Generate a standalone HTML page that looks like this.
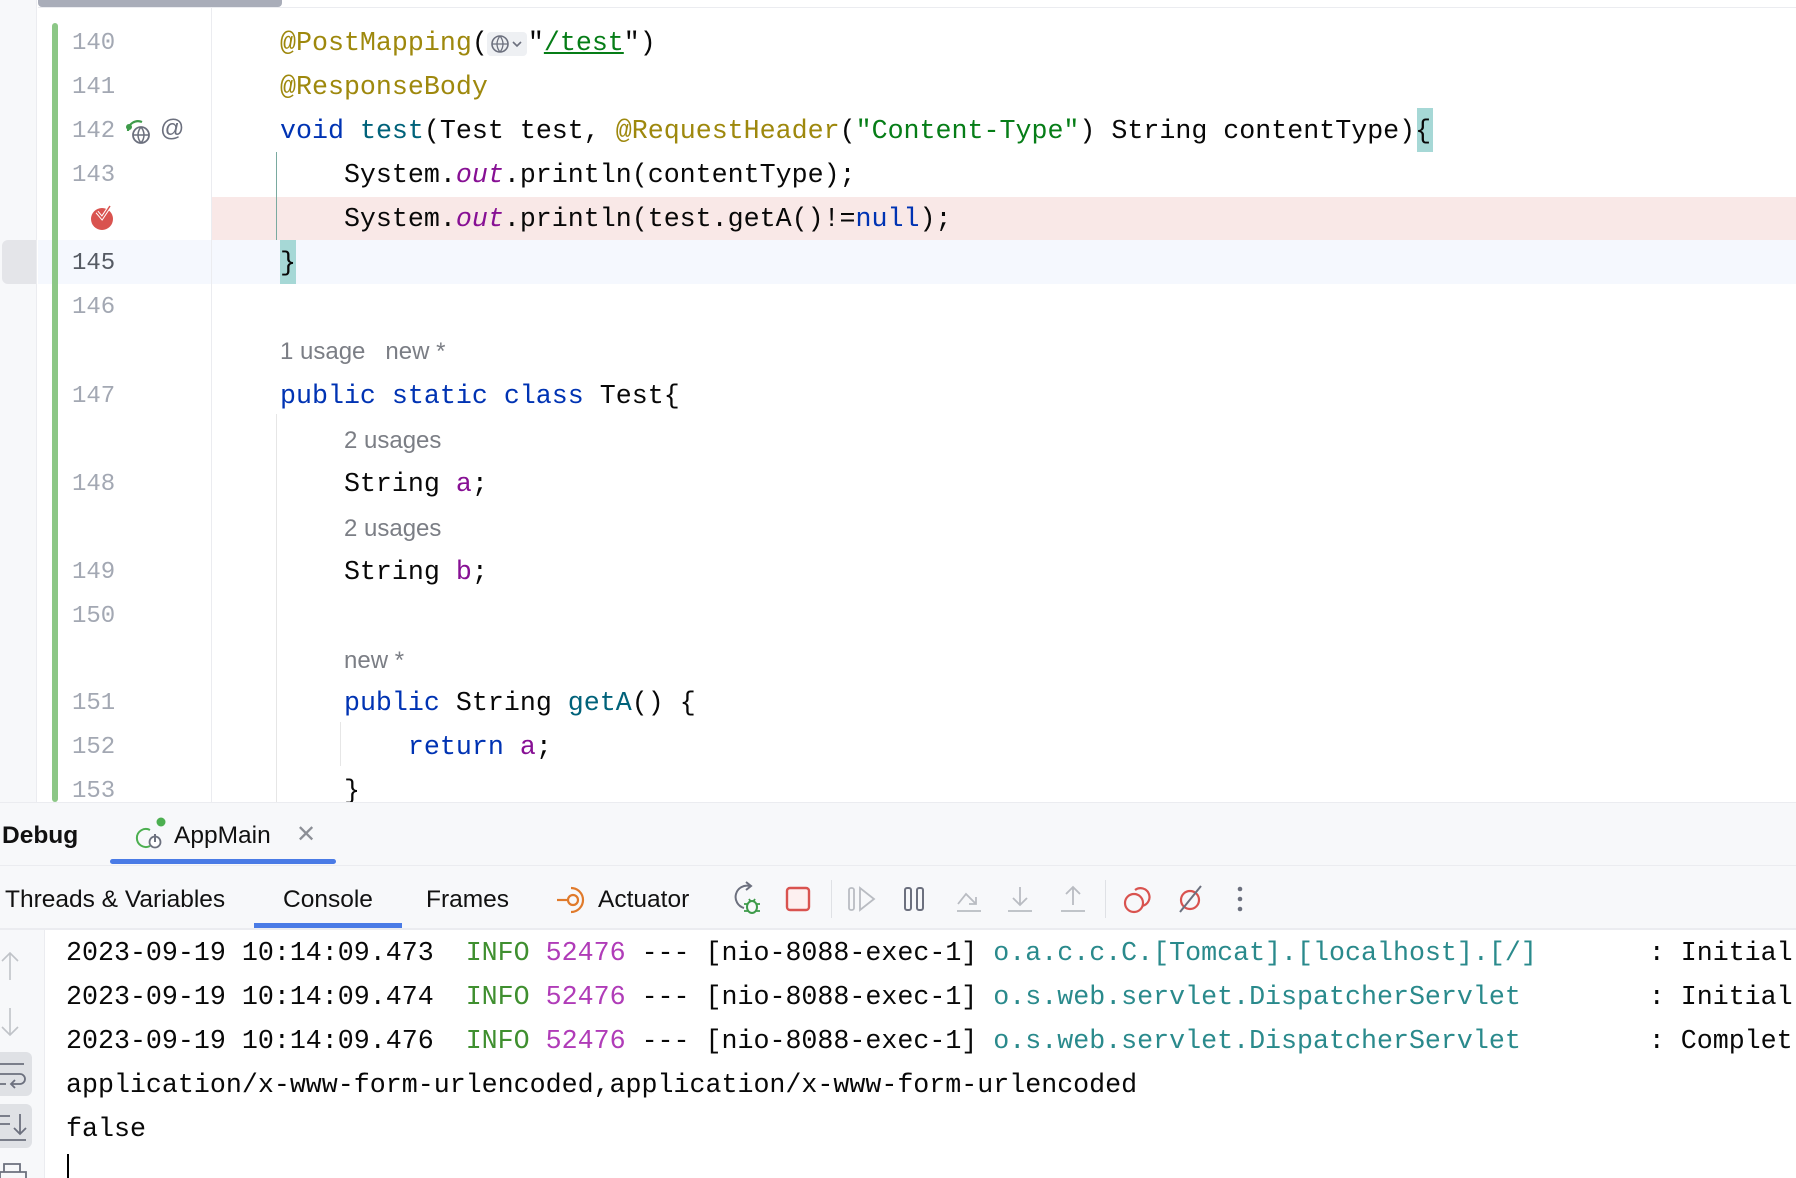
<!DOCTYPE html>
<html><head><meta charset="utf-8">
<style>
*{margin:0;padding:0;box-sizing:border-box}
body{width:1796px;height:1178px;overflow:hidden;background:#fff;position:relative;font-family:"Liberation Sans",sans-serif}
.mono{font-family:"Liberation Mono","DejaVu Sans Mono",monospace}
.abs{position:absolute}
.ln{position:absolute;left:72px;font-size:24px;color:#a3a8b3;line-height:44px;height:44px;margin-top:2px}
.cl{position:absolute;left:280px;font-size:26.65px;line-height:44px;height:44px;white-space:pre;color:#080808;margin-top:2px}
.inl{position:absolute;font-size:24px;color:#7b7e85;line-height:44px;height:44px;white-space:pre;margin-top:2px}
.an{color:#9e880d}.kw{color:#0033b3}.md{color:#00627a}.st{color:#067d17}.fd{color:#871094}
.it{font-style:italic}
.con{position:absolute;left:66px;font-size:26.65px;line-height:44px;height:44px;white-space:pre;color:#080808;margin-top:2px}
.g{color:#3f8f2f}.m{color:#b03cb8}.t{color:#2a8a8c}
.tab{position:absolute;font-size:24.5px;color:#111;line-height:44px;margin-top:1px}
</style></head><body>
<!-- editor gutter -->
<div class="abs" style="left:0;top:0;width:37px;height:802px;background:#f7f8fa;border-right:1px solid #ebecf0"></div>
<div class="abs" style="left:38px;top:7px;width:1758px;height:1px;background:#ebecf0"></div>
<div class="abs" style="left:38px;top:0;width:244px;height:7px;background:#a9adb9;border-radius:0 0 4px 4px"></div>
<div class="abs" style="left:211px;top:8px;width:1px;height:794px;background:#ebecf0"></div>
<!-- highlight rows -->
<div class="abs" style="left:212px;top:197px;width:1584px;height:43px;background:#f9e8e7"></div>
<div class="abs" style="left:212px;top:240px;width:1584px;height:44px;background:#f5f8fe"></div>
<div class="abs" style="left:38px;top:240px;width:173px;height:44px;background:#f5f8fe"></div>
<div class="abs" style="left:2px;top:240px;width:34px;height:44px;background:#e4e5e9;border-radius:6px 0 0 6px"></div>
<div class="abs" style="left:52px;top:23px;width:6px;height:779px;background:#8cc786;border-radius:3px"></div>
<!-- indent guides -->
<div class="abs" style="left:276px;top:152px;width:1px;height:88px;background:#7aaaa0"></div>
<div class="abs" style="left:276px;top:414px;width:1px;height:388px;background:#e6e6e6"></div>
<div class="abs" style="left:340px;top:722px;width:1px;height:44px;background:#e6e6e6"></div>
<div class="abs" style="left:280px;top:240px;width:16px;height:44px;background:#a6d8d6"></div>
<div class="abs" style="left:1417px;top:108px;width:16px;height:44px;background:#a6d8d6"></div>
<!-- line numbers -->
<div class="ln mono" style="top:20px">140</div>
<div class="ln mono" style="top:64px">141</div>
<div class="ln mono" style="top:108px">142</div>
<div class="ln mono" style="top:152px">143</div>
<div class="ln mono" style="top:240px;color:#555a63">145</div>
<div class="ln mono" style="top:284px">146</div>
<div class="ln mono" style="top:373px">147</div>
<div class="ln mono" style="top:461px">148</div>
<div class="ln mono" style="top:549px">149</div>
<div class="ln mono" style="top:593px">150</div>
<div class="ln mono" style="top:680px">151</div>
<div class="ln mono" style="top:724px">152</div>
<div class="ln mono" style="top:768px">153</div>
<!-- gutter icons -->
<svg class="abs" style="left:124px;top:117px" width="30" height="30" viewBox="0 0 30 30"><path d="M4 14a10 10 0 0 1 14-9" fill="none" stroke="#3e9b4a" stroke-width="2.2"/><circle cx="5" cy="10" r="3" fill="#3e9b4a"/><circle cx="17" cy="18" r="8" fill="none" stroke="#6c707e" stroke-width="1.8"/><path d="M9 18h16M17 10c-4 5-4 11 0 16M17 10c4 5 4 11 0 16" fill="none" stroke="#6c707e" stroke-width="1.5"/></svg>
<div class="abs" style="left:160px;top:114px;font-size:24px;color:#6c707e;line-height:30px">@</div>
<svg class="abs" style="left:90px;top:204px" width="26" height="28" viewBox="0 0 26 28"><circle cx="12" cy="15" r="11" fill="#d9534f"/><path d="M7 8l5 6 8-12" fill="none" stroke="#fff" stroke-width="3.5"/><path d="M7 8l5 6 8-12" fill="none" stroke="#d9534f" stroke-width="1.5"/></svg>
<!-- code -->
<div class="cl mono" style="top:20px"><span class="an">@PostMapping</span>(<span style="display:inline-block;width:40px"></span>"<span class="st" style="text-decoration:underline">/test</span>")</div>
<svg class="abs" style="left:487px;top:31px" width="40" height="26" viewBox="0 0 40 26"><rect x="0" y="1" width="40" height="24" rx="4" fill="#eef0f3"/><circle cx="13" cy="13" r="8" fill="none" stroke="#6c707e" stroke-width="1.6"/><path d="M5 13h16M13 5c-4 5-4 11 0 16M13 5c4 5 4 11 0 16" fill="none" stroke="#6c707e" stroke-width="1.3"/><path d="M26 11l4 4 4-4" fill="none" stroke="#6c707e" stroke-width="1.6"/></svg>
<div class="cl mono" style="top:64px"><span class="an">@ResponseBody</span></div>
<div class="cl mono" style="top:108px"><span class="kw">void</span> <span class="md">test</span>(Test test, <span class="an">@RequestHeader</span>(<span class="st">"Content-Type"</span>) String contentType){</div>
<div class="cl mono" style="top:152px">    System.<span class="fd it">out</span>.println(contentType);</div>
<div class="cl mono" style="top:196px">    System.<span class="fd it">out</span>.println(test.getA()!=<span class="kw">null</span>);</div>
<div class="cl mono" style="top:240px">}</div>
<div class="inl" style="left:280px;top:328px">1 usage   new *</div>
<div class="cl mono" style="top:373px"><span class="kw">public static class</span> Test{</div>
<div class="inl" style="left:344px;top:417px">2 usages</div>
<div class="cl mono" style="top:461px">    String <span class="fd">a</span>;</div>
<div class="inl" style="left:344px;top:505px">2 usages</div>
<div class="cl mono" style="top:549px">    String <span class="fd">b</span>;</div>
<div class="inl" style="left:344px;top:637px">new *</div>
<div class="cl mono" style="top:680px">    <span class="kw">public</span> String <span class="md">getA</span>() {</div>
<div class="cl mono" style="top:724px">        <span class="kw">return</span> <span class="fd">a</span>;</div>
<div class="cl mono" style="top:768px">    }</div>
<!-- debug panel -->
<div class="abs" style="left:0;top:802px;width:1796px;height:127px;background:#f7f8fa;border-top:1px solid #ebecf0"></div>
<div class="abs" style="left:0;top:865px;width:1796px;height:1px;background:#ebecf0"></div>
<div class="abs" style="left:0;top:928px;width:1796px;height:2px;background:#ebecf0"></div>
<div class="tab" style="left:2px;top:813px;font-weight:bold">Debug</div>
<svg class="abs" style="left:134px;top:816px" width="34" height="34" viewBox="0 0 34 34"><circle cx="27" cy="6" r="4.5" fill="#4caf50"/><path d="M16 14a9 9 0 1 0 0 16" fill="none" stroke="#4caf50" stroke-width="2"/><circle cx="21" cy="26" r="5.5" fill="#fff" stroke="#6c707e" stroke-width="1.8"/><path d="M21 18v8" stroke="#6c707e" stroke-width="2"/></svg>
<div class="tab" style="left:174px;top:813px">AppMain</div>
<div class="tab" style="left:296px;top:812px;color:#8c8f96;font-size:24px">✕</div>
<div class="abs" style="left:110px;top:859px;width:226px;height:5px;background:#4a7be6;border-radius:3px"></div>
<div class="tab" style="left:5px;top:877px">Threads &amp; Variables</div>
<div class="tab" style="left:283px;top:877px">Console</div>
<div class="tab" style="left:426px;top:877px">Frames</div>
<div class="abs" style="left:254px;top:923px;width:148px;height:5px;background:#4a7be6"></div>
<svg class="abs" style="left:555px;top:884px" width="34" height="32" viewBox="0 0 34 32"><path d="M16 4a12 12 0 1 1 0 24" fill="none" stroke="#e07a2b" stroke-width="2.2"/><circle cx="18" cy="16" r="5" fill="none" stroke="#e07a2b" stroke-width="2.2"/><path d="M2 16h11" stroke="#e07a2b" stroke-width="2.2"/></svg>
<div class="tab" style="left:598px;top:877px">Actuator</div>
<!-- toolbar icons -->
<svg class="abs" style="left:730px;top:880px" width="36" height="38" viewBox="0 0 36 38"><path d="M20 6a11 11 0 1 0 -6 22" fill="none" stroke="#6c707e" stroke-width="2"/><path d="M16 2l5 4-5 4" fill="none" stroke="#6c707e" stroke-width="2"/><ellipse cx="22" cy="27" rx="5" ry="6" fill="none" stroke="#3e9b4a" stroke-width="2"/><path d="M14 24h4M26 24h4M14 31h4M26 31h4M19 19l2 3M25 19l-2 3" stroke="#3e9b4a" stroke-width="1.8"/></svg>
<svg class="abs" style="left:784px;top:884px" width="28" height="30" viewBox="0 0 28 30"><rect x="3" y="4" width="22" height="22" rx="3" fill="#fdf0f0" stroke="#d9534f" stroke-width="2.4"/></svg>
<div class="abs" style="left:831px;top:880px;width:1px;height:38px;background:#dfe1e5"></div>
<svg class="abs" style="left:846px;top:884px" width="34" height="30" viewBox="0 0 34 30"><rect x="3" y="4" width="5" height="22" rx="2" fill="none" stroke="#b9bcc2" stroke-width="1.8"/><path d="M14 4l14 11-14 11z" fill="none" stroke="#b9bcc2" stroke-width="1.8"/></svg>
<svg class="abs" style="left:901px;top:884px" width="28" height="30" viewBox="0 0 28 30"><rect x="4" y="4" width="6" height="22" rx="2" fill="none" stroke="#6c707e" stroke-width="2"/><rect x="16" y="4" width="6" height="22" rx="2" fill="none" stroke="#6c707e" stroke-width="2"/></svg>
<svg class="abs" style="left:954px;top:884px" width="30" height="30" viewBox="0 0 30 30"><path d="M3 27h24M4 20l8-10 10 10M22 13v7h-7" fill="none" stroke="#b9bcc2" stroke-width="1.8"/></svg>
<svg class="abs" style="left:1005px;top:884px" width="30" height="30" viewBox="0 0 30 30"><path d="M3 27h24M15 3v18M8 14l7 7 7-7" fill="none" stroke="#b9bcc2" stroke-width="1.8"/></svg>
<svg class="abs" style="left:1058px;top:884px" width="30" height="30" viewBox="0 0 30 30"><path d="M3 27h24M15 21V3M8 10l7-7 7 7" fill="none" stroke="#b9bcc2" stroke-width="1.8"/></svg>
<div class="abs" style="left:1105px;top:880px;width:1px;height:38px;background:#dfe1e5"></div>
<svg class="abs" style="left:1122px;top:882px" width="32" height="34" viewBox="0 0 32 34"><circle cx="12" cy="21" r="9" fill="none" stroke="#d9534f" stroke-width="2.2"/><path d="M13 8a9 9 0 1 1 7 16" fill="none" stroke="#d9534f" stroke-width="2.2"/></svg>
<svg class="abs" style="left:1174px;top:882px" width="32" height="34" viewBox="0 0 32 34"><circle cx="16" cy="18" r="9" fill="none" stroke="#d9534f" stroke-width="2.2"/><path d="M27 4L6 30" stroke="#6c707e" stroke-width="2"/></svg>
<svg class="abs" style="left:1232px;top:884px" width="16" height="30" viewBox="0 0 16 30"><circle cx="8" cy="5" r="2.3" fill="#6c707e"/><circle cx="8" cy="15" r="2.3" fill="#6c707e"/><circle cx="8" cy="25" r="2.3" fill="#6c707e"/></svg>
<!-- console left strip -->
<div class="abs" style="left:0;top:930px;width:45px;height:248px;background:#f7f8fa;border-right:1px solid #ebecf0"></div>
<svg class="abs" style="left:0;top:950px" width="24" height="32" viewBox="0 0 24 32"><path d="M10 30V3M2 11l8-8 8 8" fill="none" stroke="#c0c3c8" stroke-width="1.6"/></svg>
<svg class="abs" style="left:0;top:1006px" width="24" height="32" viewBox="0 0 24 32"><path d="M10 2v27M2 21l8 8 8-8" fill="none" stroke="#c0c3c8" stroke-width="1.6"/></svg>
<div class="abs" style="left:0;top:1052px;width:32px;height:44px;background:#dfe1e5;border-radius:0 6px 6px 0"></div>
<svg class="abs" style="left:0;top:1056px" width="32" height="36" viewBox="0 0 32 36"><path d="M0 8h24M0 18h20a5 5 0 0 1 0 10h-8M15 24l-4 4 4 4M0 28h6" fill="none" stroke="#6c707e" stroke-width="1.8"/></svg>
<div class="abs" style="left:0;top:1104px;width:32px;height:44px;background:#dfe1e5;border-radius:0 6px 6px 0"></div>
<svg class="abs" style="left:0;top:1108px" width="32" height="36" viewBox="0 0 32 36"><path d="M0 8h10M0 16h10M0 32h26M20 6v20M14 20l6 6 6-6" fill="none" stroke="#6c707e" stroke-width="1.8"/></svg>
<svg class="abs" style="left:0;top:1160px" width="32" height="18" viewBox="0 0 32 18"><path d="M4 12V4h16v8M0 18V12h26v6" fill="none" stroke="#6c707e" stroke-width="1.8"/></svg>
<!-- console text -->
<div class="con mono" style="top:930px">2023-09-19 10:14:09.473  <span class="g">INFO</span> <span class="m">52476</span> --- [nio-8088-exec-1] <span class="t">o.a.c.c.C.[Tomcat].[localhost].[/]</span>       : Initial</div>
<div class="con mono" style="top:974px">2023-09-19 10:14:09.474  <span class="g">INFO</span> <span class="m">52476</span> --- [nio-8088-exec-1] <span class="t">o.s.web.servlet.DispatcherServlet</span>        : Initial</div>
<div class="con mono" style="top:1018px">2023-09-19 10:14:09.476  <span class="g">INFO</span> <span class="m">52476</span> --- [nio-8088-exec-1] <span class="t">o.s.web.servlet.DispatcherServlet</span>        : Complet</div>
<div class="con mono" style="top:1062px">application/x-www-form-urlencoded,application/x-www-form-urlencoded</div>
<div class="con mono" style="top:1106px">false</div>
<div class="abs" style="left:67px;top:1154px;width:2px;height:24px;background:#000"></div>
</body></html>
